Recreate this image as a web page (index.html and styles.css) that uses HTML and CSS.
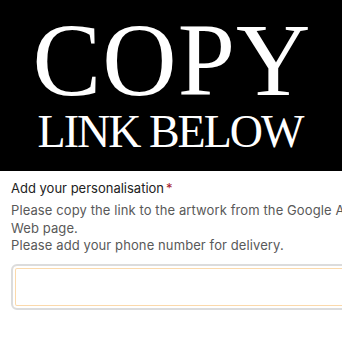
FILE: index.html
```html
<!DOCTYPE html>
<html lang="en">
<head>
<meta charset="utf-8">
<title>Copy link below</title>
<link rel="stylesheet" href="styles.css">
</head>
<body>
<div class="banner">
  <div class="big">COPY</div>
  <div class="small">LINK BELOW</div>
</div>
<div class="form">
  <label class="label" for="pers">Add your personalisation<span class="req">*</span></label>
  <p class="desc">Please copy the link to the artwork from the Google Arts &amp; Culture<br>Web page.<br>Please add your phone number for delivery.</p>
  <textarea id="pers" class="input"></textarea>
</div>
</body>
</html>
```
FILE: styles.css
```css
html, body {
  margin: 0;
  padding: 0;
  background: #fff;
  overflow: hidden;
}
.banner {
  background: #000;
  height: 171px;
  box-sizing: border-box;
  padding-top: 10px;
  display: flex;
  flex-direction: column;
  align-items: center;
  color: #fff;
  font-family: "Liberation Serif", serif;
}
.big {
  font-size: 103px;
  line-height: 100px;
  letter-spacing: 1px;
  margin-left: 2px;
}
.small {
  font-size: 46px;
  line-height: 44px;
  letter-spacing: -2px;
  margin-left: -2px;
}
.form {
  width: 460px;
  padding: 8px 11px 0;
  font-family: "Inter", "Noto Sans", sans-serif;
}
.label {
  display: block;
  font-size: 13px;
  line-height: 18px;
  color: #222;
}
.req {
  color: #a61a2e;
  margin-left: 2px;
}
.desc {
  margin: 5px 0 0;
  font-size: 13px;
  line-height: 17.5px;
  letter-spacing: 0.1px;
  color: #595959;
}
.input {
  display: block;
  box-sizing: border-box;
  width: 100%;
  height: 46px;
  margin-top: 9px;
  border: 2px solid #dcdcdc;
  border-radius: 6px;
  box-shadow: inset 0 0 0 2px #fff, inset 0 0 0 3px #fbd9ab;
  resize: none;
  outline: none;
  background: #fff;
}
```
